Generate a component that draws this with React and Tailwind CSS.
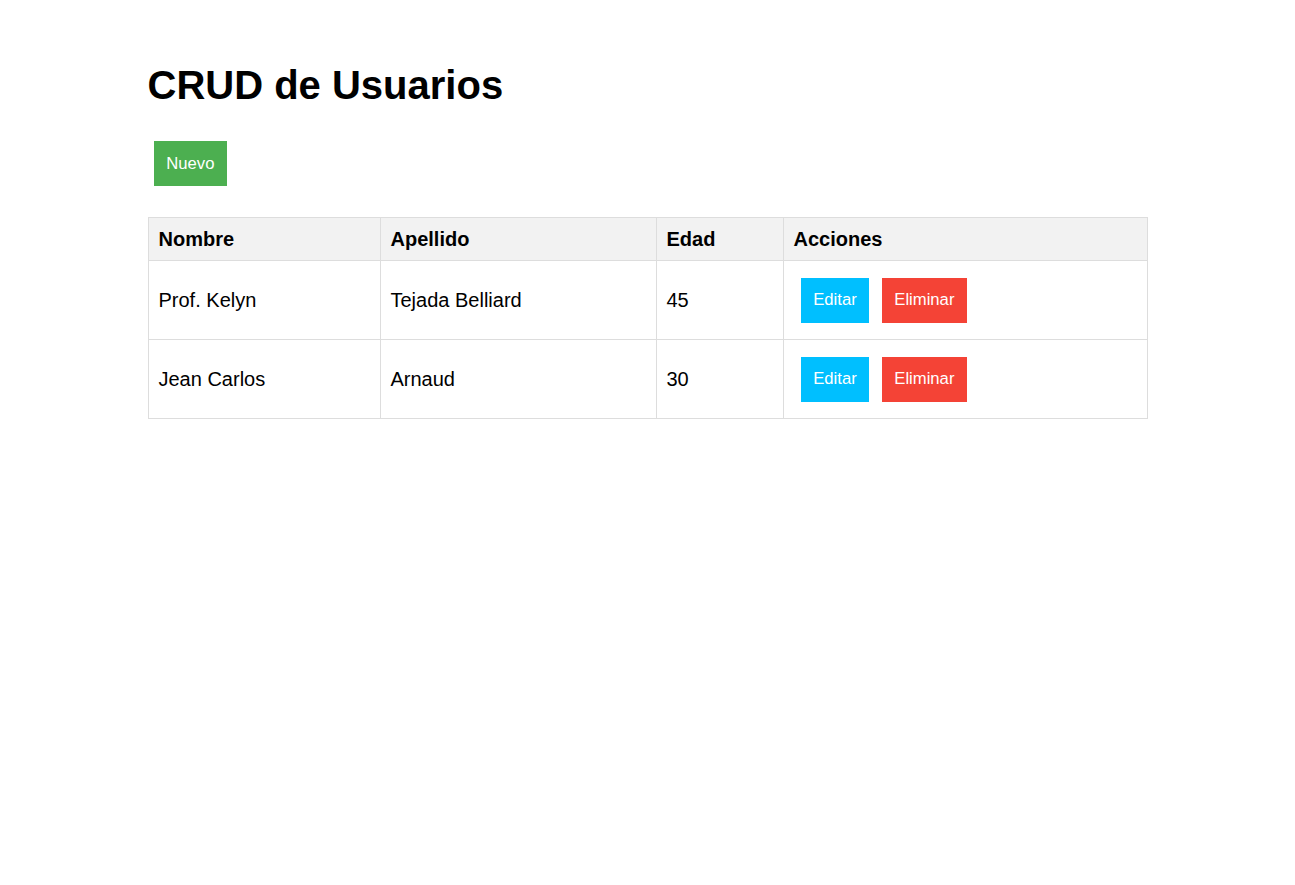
const users = [
  { id: 1, nombre: 'Prof. Kelyn', apellido: 'Tejada Belliard', edad: 45 },
  { id: 2, nombre: 'Jean Carlos', apellido: 'Arnaud', edad: 30 },
];

function Btn({ color, children }) {
  return (
    <button className={`m-[6.25px] h-[45px] px-[12.5px] text-[16.67px] leading-[20px] text-white ${color}`}>
      {children}
    </button>
  );
}

export default function App() {
  return (
    <div className="min-h-[885px] bg-white font-['Liberation_Sans',Arial,sans-serif] text-black">
      <div className="mx-auto w-[1000px] pt-[62px]">
        <h1 className="text-[40px] font-bold leading-[46px]">CRUD de Usuarios</h1>
        <div className="mt-[26.75px] flex">
          <Btn color="bg-[#4caf50]">Nuevo</Btn>
        </div>
        <table className="mt-[25px] w-[1000px] table-fixed border-collapse border border-[#dddddd] text-[20px]">
          <colgroup>
            <col className="w-[232px]" />
            <col className="w-[276px]" />
            <col className="w-[127px]" />
            <col />
          </colgroup>
          <thead>
            <tr className="bg-[#f2f2f2]">
              {['Nombre', 'Apellido', 'Edad', 'Acciones'].map((h) => (
                <th key={h} className="h-[43px] border border-[#dddddd] px-[10px] text-left font-bold leading-[23px]">
                  {h}
                </th>
              ))}
            </tr>
          </thead>
          <tbody>
            {users.map((u) => (
              <tr key={u.id}>
                <td className="border border-[#dddddd] px-[10px] leading-[23px]">{u.nombre}</td>
                <td className="border border-[#dddddd] px-[10px] leading-[23px]">{u.apellido}</td>
                <td className="border border-[#dddddd] px-[10px] leading-[23px]">{u.edad}</td>
                <td className="border border-[#dddddd] px-[10px] py-[10.25px]">
                  <div className="ml-[1px] flex">
                    <Btn color="bg-[#00bfff]">Editar</Btn>
                    <Btn color="bg-[#f44336]">Eliminar</Btn>
                  </div>
                </td>
              </tr>
            ))}
          </tbody>
        </table>
      </div>
    </div>
  );
}
